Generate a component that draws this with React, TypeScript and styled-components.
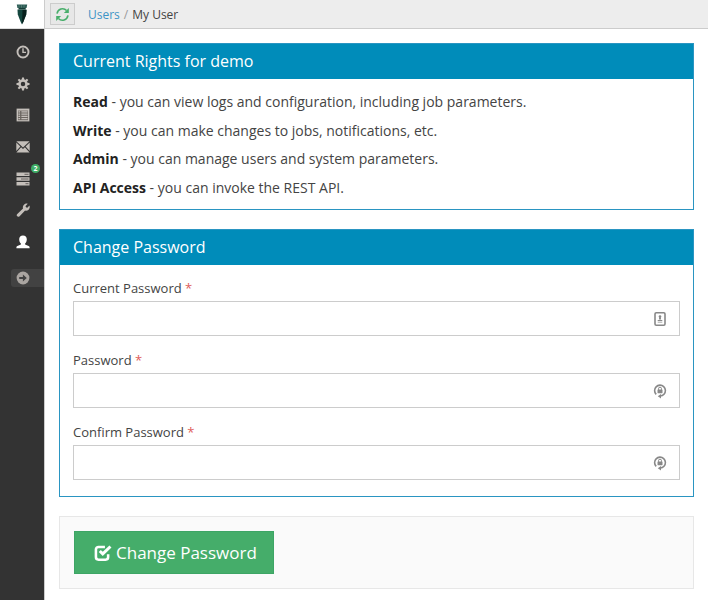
import React, { useId } from "react";
import styled, { createGlobalStyle } from "styled-components";

const GlobalStyle = createGlobalStyle`
  *, *::before, *::after { box-sizing: border-box; }
  body {
    margin: 0;
    background: #fff;
    color: #444;
    font-family: "Open Sans", "Noto Sans", sans-serif;
    font-size: 13px;
    line-height: 19px;
  }
`;

const Page = styled.div`
  display: grid;
  grid-template-columns: 45px minmax(0, 1fr);
  min-height: 100vh;
`;

const Sidebar = styled.aside`
  display: flex;
  flex-direction: column;
  background: #333;
  border-right: 1px solid #ccc;
`;

const Brand = styled.a`
  display: flex;
  justify-content: center;
  height: 29px;
  padding-top: 4px;
  background: #fff;
  border-bottom: 1px solid #ddd;
`;

const Nav = styled.nav`
  display: grid;
  grid-auto-rows: 1fr;
  height: 222px;
  margin-top: 7px;
`;

const NavItem = styled.a<{ $active?: boolean }>`
  position: relative;
  display: flex;
  align-items: center;
  padding-left: 16px;
  color: ${(p) => (p.$active ? "#fff" : "#c4bfba")};
`;

const Badge = styled.span`
  position: absolute;
  top: 1px;
  right: 4px;
  width: 9px;
  height: 9px;
  border-radius: 50%;
  background: #3fae66;
  color: #fff;
  font-size: 7px;
  font-weight: 700;
  line-height: 9px;
  text-align: center;
`;

const Expand = styled.button`
  display: flex;
  align-items: center;
  height: 18px;
  margin: 11px 0 0 11px;
  padding: 0 0 0 5px;
  border: 0;
  border-radius: 3px 0 0 3px;
  background: #424242;
  color: #aaa5a1;
`;

const TopBar = styled.header`
  display: flex;
  align-items: center;
  gap: 13px;
  height: 29px;
  padding: 0 5px;
  background: #ededed;
  border-bottom: 1px solid #ccc;
`;

const RefreshButton = styled.button`
  display: flex;
  align-items: center;
  justify-content: center;
  width: 25px;
  height: 22px;
  padding: 0;
  border: 1px solid #ccc;
  background: #e7e7e7;
  color: #48ae6b;
`;

const Crumbs = styled.nav`
  display: flex;
  gap: 4px;
  font-size: 12px;
`;

const CrumbLink = styled.a`
  color: #3d94c6;
  text-decoration: none;
`;

const Slash = styled.span`
  color: #999;
`;

const Content = styled.form`
  display: flex;
  flex-direction: column;
  gap: 19px;
  padding: 14px 14px 11px;
`;

const Panel = styled.section`
  border: 1px solid #2a95c2;
`;

const PanelTitle = styled.h2`
  margin: 0;
  padding: 6px 13px;
  background: #008cba;
  color: #fff;
  font-size: 16px;
  font-weight: 400;
  line-height: 23px;
`;

const Rights = styled.div`
  display: grid;
  grid-auto-rows: 1fr;
  height: 130px;
  padding: 8px 13px 7px;
  font-size: 14px;
`;

const Right = styled.p`
  display: flex;
  align-items: center;
  margin: 0;
  white-space: pre-wrap;
`;

const Strong = styled.strong`
  color: #222;
  font-weight: 700;
`;

const Fields = styled.div`
  display: flex;
  flex-direction: column;
  gap: 15px;
  padding: 14px 13px 16px;
`;

const Field = styled.div`
  display: flex;
  flex-direction: column;
  gap: 3px;
`;

const Label = styled.label`
  color: #444;
`;

const Required = styled.span`
  color: #e0605a;
`;

const InputWrap = styled.div`
  position: relative;
  display: flex;
`;

const Input = styled.input`
  width: 100%;
  height: 35px;
  padding: 0 36px 0 10px;
  border: 1px solid #ccc;
  background: #fff;
  color: #444;
  font: inherit;
`;

const InputIcon = styled.span`
  position: absolute;
  top: 10px;
  right: 12px;
  display: flex;
  color: #888;
`;

const Actions = styled.div`
  padding: 14px;
  border: 1px solid #e7e7e7;
  background: #fafafa;
`;

const SubmitButton = styled.button`
  display: flex;
  align-items: center;
  gap: 4px;
  height: 43px;
  padding: 0 16px 0 19px;
  border: 1px solid #3da565;
  background: #45ad6a;
  color: #fff;
  font-family: inherit;
  font-size: 17px;
  line-height: 25px;
`;

type IconProps = { children: React.ReactNode; size?: number };

const Icon = ({ children, size = 14 }: IconProps) => (
  <svg width={size} height={size} viewBox="0 0 14 14" fill="currentColor" aria-hidden="true">
    {children}
  </svg>
);

const ClockIcon = () => (
  <Icon>
    <circle cx="7" cy="7" r="5.5" fill="none" stroke="currentColor" strokeWidth="1.9" />
    <path d="M7 3.2v4.2h3" fill="none" stroke="currentColor" strokeWidth="1.4" />
  </Icon>
);

const CogIcon = () => (
  <Icon>
    <circle cx="7" cy="7" r="3.5" fill="none" stroke="currentColor" strokeWidth="2.5" />
    {[0, 45, 90, 135, 180, 225, 270, 315].map((a) => (
      <path key={a} d="M5.7 3 6 .5h2L8.3 3z" transform={`rotate(${a} 7 7)`} />
    ))}
  </Icon>
);

const ListIcon = () => (
  <Icon>
    <path d="M.6.6h12.8v12.8H.6z" />
    <path d="M2 2.6h10v9.6H2z" fill="#6b6560" />
    <path
      d="M2.4 3.8h1.7M5.4 3.8h6.2M2.4 6.1h1.7M5.4 6.1h6.2M2.4 8.400h1.700M5.400 8.400h6.200M2.400 10.700h1.700M5.400 10.700h6.200"
      stroke="currentColor"
      strokeWidth="1.2"
    />
  </Icon>
);

const EnvelopeIcon = () => (
  <Icon>
    <path d="M.4 1.3h13.2L7 7.4z" />
    <path d="M.3 2.5 4.4 6.6.3 11zM13.7 2.5 9.6 6.6l4.1 4.4zM5.1 7.2 7 8.9l1.9-1.7 4.7 5.3H.4z" />
  </Icon>
);

const TasksIcon = () => (
  <Icon>
    <path d="M.5.5h13v3.6H.5zM.5 5.2h13v3.6H.5zM.5 9.9h13v3.6H.5z" />
    <path d="M8.5 2.3h4M5 7h7.5M9.5 11.7h3" stroke="#5a5552" strokeWidth=".9" />
  </Icon>
);

const WrenchIcon = () => (
  <Icon>
    <path d="M13.5 2.6c.5 1.6.2 3.1-.9 4.1-1 .9-2.4 1.2-3.5.8l-5.5 5.7c-.7.7-1.7.7-2.4.1-.7-.7-.6-1.7.1-2.4l5.7-5.4c-.4-1.4 0-2.8 1-3.8C9 .6 10.4.3 11.7.8L9.4 3.2l1.6 1.7z" />
  </Icon>
);

const UserIcon = () => (
  <Icon>
    <path d="M7 .5c2.4 0 3.8 1.6 3.8 3.8 0 1.8-.6 3.2-1.7 4.2v1.1l3.5 1.5c.7.3 1 .8 1 1.5v.7H.4v-.7c0-.7.3-1.2 1-1.5l3.5-1.5V8.5C3.8 7.5 3.2 6.1 3.2 4.3 3.2 2.1 4.6.5 7 .5z" />
  </Icon>
);

const ArrowCircleIcon = () => (
  <Icon>
    <circle cx="7" cy="7" r="6.4" />
    <path d="M3.2 5.9h3.7V3.6L10.8 7l-3.9 3.4V8.1H3.2z" fill="#424242" />
  </Icon>
);

const RefreshIcon = () => (
  <Icon size={15}>
    <path
      d="M1.9 6.2A5.2 5.2 0 0 1 10.8 3.3M12.1 7.8A5.2 5.2 0 0 1 3.2 10.7"
      fill="none"
      stroke="currentColor"
      strokeWidth="1.5"
    />
    <path d="M12.9.9v4.6H8.3zM1.1 13.1V8.5h4.6z" />
  </Icon>
);

const CheckIcon = () => (
  <Icon size={18}>
    <path
      d="M11 8v2.2a2 2 0 0 1-2 2H3.500a2 2 0 0 1-2-2V4.300a2 2 0 0 1 2-2h5"
      fill="none"
      stroke="currentColor"
      strokeWidth="2"
    />
    <path d="m4.500 5.400 2.300 2.300 6-5.800" fill="none" stroke="currentColor" strokeWidth="2.300" />
  </Icon>
);

const BrandMark = () => (
  <svg width="14" height="21" viewBox="0 0 14 21" aria-hidden="true">
    <path d="M1.800.6h10.400l-.6 3.300H2.400z" fill="#2b5c54" />
    <path d="M3.500 3.900h7.200v1.600H3.500z" fill="#173c37" />
    <path d="M2.500 5.500h9l-.3 5L8.300 18 7 20.500 5.700 18 2.800 10.500z" fill="#14463e" />
    <path d="M7.500 6h4l-.3 4.500L8.300 18 7 20z" fill="#08201d" />
    <path d="M4 1.200v2.400M6.500 1.200v2.400M9 1.200v2.400" stroke="#66857f" strokeWidth=".7" />
  </svg>
);

const CardKeyIcon = () => (
  <svg width="16" height="16" viewBox="0 0 16 16" fill="currentColor" aria-hidden="true">
    <rect x="3" y="1.8" width="10" height="12.4" rx="1.2" fill="none" stroke="currentColor" strokeWidth="1.6" />
    <circle cx="8" cy="5.5" r="1.3" />
    <path d="M7.3 6h1.4l.4 2.5H6.9zM5.7 9h4.600v1H5.700zM5.700 10.800h4.600v.8H5.700z" />
  </svg>
);

const LockCycleIcon = () => (
  <svg width="16" height="16" viewBox="0 0 16 16" fill="currentColor" aria-hidden="true">
    <path
      d="M4.200 11.400A5.400 5.400 0 1 1 12 11.200Q10.600 12.900 8 13"
      fill="none"
      stroke="currentColor"
      strokeWidth="1.600"
    />
    <path d="M9 10.900v4.600L5.800 13.200z" />
    <rect x="5.500" y="6.600" width="5" height="3.600" rx=".4" />
    <path d="M6.500 6.800V5.700a1.500 1.500 0 0 1 3 0v1.100" fill="none" stroke="currentColor" strokeWidth="1" />
  </svg>
);

const navItems = [
  { name: "History", icon: <ClockIcon /> },
  { name: "Settings", icon: <CogIcon /> },
  { name: "Logs", icon: <ListIcon /> },
  { name: "Messages", icon: <EnvelopeIcon /> },
  { name: "Servers", icon: <TasksIcon />, count: 2 },
  { name: "Tools", icon: <WrenchIcon /> },
  { name: "My User", icon: <UserIcon />, active: true },
];

const rights = [
  ["Read", "you can view logs and configuration, including job parameters."],
  ["Write", "you can make changes to jobs, notifications, etc."],
  ["Admin", "you can manage users and system parameters."],
  ["API Access", "you can invoke the REST API."],
];

const PasswordField = ({ label, icon }: { label: string; icon: React.ReactNode }) => {
  const id = useId();
  return (
    <Field>
      <Label htmlFor={id}>
        {label} <Required>*</Required>
      </Label>
      <InputWrap>
        <Input id={id} type="password" required />
        <InputIcon>{icon}</InputIcon>
      </InputWrap>
    </Field>
  );
};

export default function App() {
  return (
    <>
      <GlobalStyle />
      <Page>
        <Sidebar>
          <Brand href="#home" aria-label="Home">
            <BrandMark />
          </Brand>
          <Nav aria-label="Main">
            {navItems.map((item) => (
              <NavItem key={item.name} href="#" aria-label={item.name} $active={item.active}>
                {item.icon}
                {item.count && <Badge>{item.count}</Badge>}
              </NavItem>
            ))}
          </Nav>
          <Expand type="button" aria-label="Expand menu">
            <ArrowCircleIcon />
          </Expand>
        </Sidebar>
        <div>
          <TopBar>
            <RefreshButton type="button" aria-label="Refresh">
              <RefreshIcon />
            </RefreshButton>
            <Crumbs aria-label="Breadcrumb">
              <CrumbLink href="#users">Users</CrumbLink>
              <Slash>/</Slash>
              <span>My User</span>
            </Crumbs>
          </TopBar>
          <Content onSubmit={(e) => e.preventDefault()}>
            <Panel>
              <PanelTitle>Current Rights for demo</PanelTitle>
              <Rights>
                {rights.map(([name, text]) => (
                  <Right key={name}>
                    <Strong>{name}</Strong>
                    <span> - {text}</span>
                  </Right>
                ))}
              </Rights>
            </Panel>
            <Panel>
              <PanelTitle>Change Password</PanelTitle>
              <Fields>
                <PasswordField label="Current Password" icon={<CardKeyIcon />} />
                <PasswordField label="Password" icon={<LockCycleIcon />} />
                <PasswordField label="Confirm Password" icon={<LockCycleIcon />} />
              </Fields>
            </Panel>
            <Actions>
              <SubmitButton type="submit">
                <CheckIcon />
                Change Password
              </SubmitButton>
            </Actions>
          </Content>
        </div>
      </Page>
    </>
  );
}
